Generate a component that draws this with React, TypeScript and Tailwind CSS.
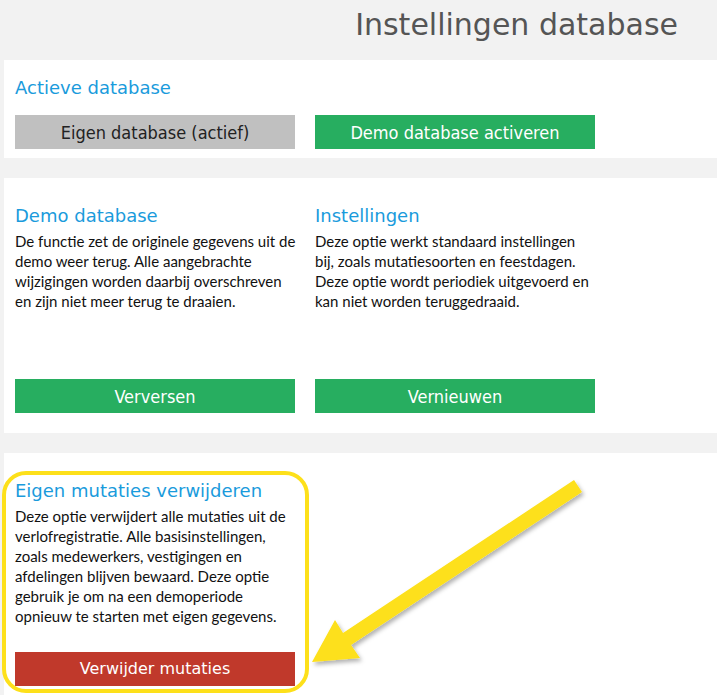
export default function App() {
  return (
    <main className="relative min-h-[695px] w-[717px] overflow-hidden bg-[#f2f2f2] text-black">
      {/* Header */}
      <div className="flex h-[60px] items-center justify-end pr-[39px]">
        <h1 className="font-['DejaVu_Sans',sans-serif] text-[30px] leading-none text-[#555] pb-[10px]">
          Instellingen database
        </h1>
      </div>

      {/* Actieve database */}
      <section className="ml-[4px] bg-white px-[11px] pt-[17px] pb-[9px]">
        <Heading>Actieve database</Heading>
        <div className="mt-[16px] flex gap-[20px]">
          <Button color="gray">Eigen database (actief)</Button>
          <Button color="green">Demo database activeren</Button>
        </div>
      </section>

      {/* Demo / Instellingen */}
      <section className="ml-[4px] mt-[20px] bg-white px-[11px] pt-[27px] pb-[20px]">
        <div className="flex gap-[20px]">
          <Column title="Demo database" lines={[
            "De functie zet de originele gegevens uit de",
            "demo weer terug. Alle aangebrachte",
            "wijzigingen worden daarbij overschreven",
            "en zijn niet meer terug te draaien.",
          ]} button="Verversen" />
          <Column title="Instellingen" lines={[
            "Deze optie werkt standaard instellingen",
            "bij, zoals mutatiesoorten en feestdagen.",
            "Deze optie wordt periodiek uitgevoerd en",
            "kan niet worden teruggedraaid.",
          ]} button="Vernieuwen" />
        </div>
      </section>

      {/* Eigen mutaties */}
      <section className="ml-[4px] mt-[20px] bg-white px-[11px] pt-[27px] pb-[20px]">
        <div className="w-[280px]">
          <Heading>Eigen mutaties verwijderen</Heading>
          <Body lines={[
            "Deze optie verwijdert alle mutaties uit de",
            "verlofregistratie. Alle basisinstellingen,",
            "zoals medewerkers, vestigingen en",
            "afdelingen blijven bewaard. Deze optie",
            "gebruik je om na een demoperiode",
            "opnieuw te starten met eigen gegevens.",
          ]} />
          <button className="mt-[26px] flex h-[34px] w-[280px] items-center justify-center bg-[#c0392b] font-['DejaVu_Sans',sans-serif] text-[16px] text-white">
            Verwijder mutaties
          </button>
        </div>
      </section>

      {/* Annotation overlay */}
      <svg className="pointer-events-none absolute left-0 top-0" width="717" height="695" viewBox="0 0 717 695">
        <defs>
          <filter id="shadow" x="-10%" y="-10%" width="130%" height="130%">
            <feDropShadow dx="2" dy="3" stdDeviation="2" floodColor="#000" floodOpacity="0.3" />
          </filter>
        </defs>
        <rect x="4" y="473" width="303" height="218" rx="22" fill="none" stroke="#fde01a" strokeWidth="4" />
        <polygon
          points="574,480 582,492 351,645 360,658 312,662 335,620 343,633"
          fill="#fde01a"
          filter="url(#shadow)"
        />
      </svg>
    </main>
  )
}

function Heading({ children }: { children: React.ReactNode }) {
  return (
    <h2 className="font-['DejaVu_Sans',sans-serif] text-[18px] leading-[22px] text-[#1a9bdc]">
      {children}
    </h2>
  )
}

function Body({ lines }: { lines: string[] }) {
  return (
    <p className="mt-[4px] whitespace-nowrap font-['Lato',sans-serif] text-[15px] leading-[20px] text-[#111]">
      {lines.map((l, i) => (
        <span key={i} className="block">{l}</span>
      ))}
    </p>
  )
}

function Column({ title, lines, button }: { title: string, lines: string[], button: string }) {
  return (
    <div className="flex w-[280px] flex-col">
      <Heading>{title}</Heading>
      <Body lines={lines} />
      <div className="mt-[68px]">
        <Button color="green">{button}</Button>
      </div>
    </div>
  )
}

const Button = ({ color, children }: { color: "gray" | "green", children: React.ReactNode }) => (
  <button
    className={
      (color === "gray" ? "bg-[#c0c0c0] text-[#222] " : "bg-[#27ae60] text-white ") +
      "flex h-[34px] w-[280px] items-center justify-center font-['Liberation_Sans_Narrow','DejaVu_Sans_Condensed',sans-serif] text-[18px] [font-stretch:condensed]"
    }
  >
    {children}
  </button>
)
